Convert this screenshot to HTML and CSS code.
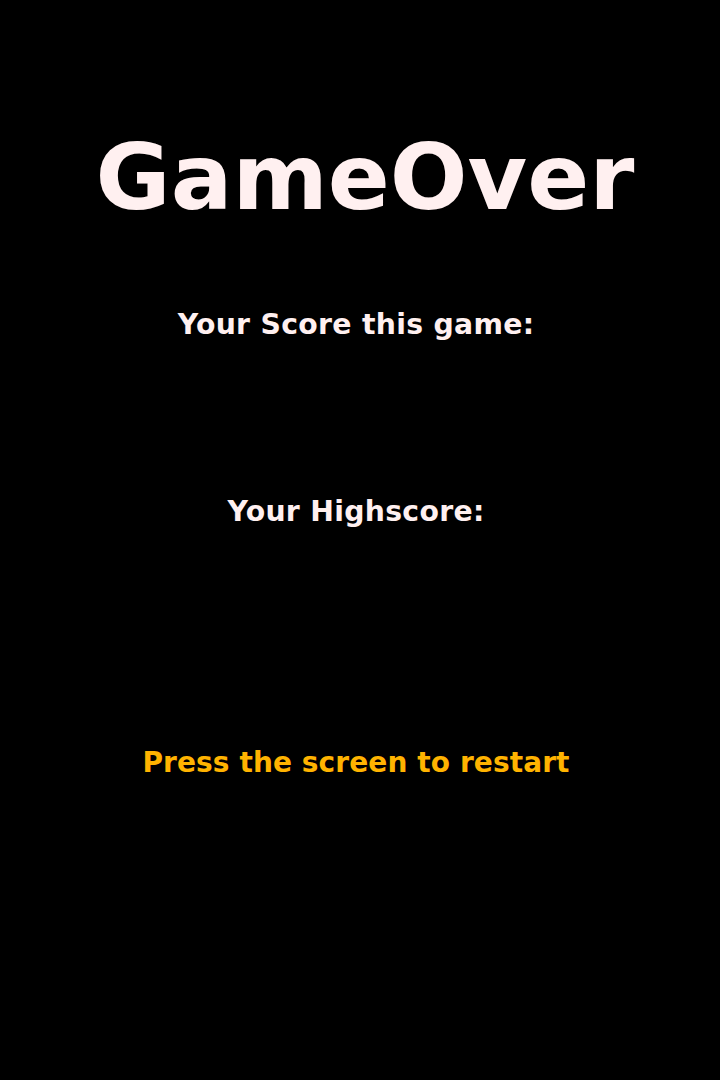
FILE: index.html
```html
<!DOCTYPE html>
<html lang="en">
<head>
<meta charset="utf-8">
<title>Game Over</title>
<link rel="stylesheet" href="styles.css">
</head>
<body>
<main class="screen">
  <h1 class="title">GameOver</h1>
  <section class="score">
    <p class="label">Your Score this game:</p>
    <p class="value"></p>
  </section>
  <section class="score">
    <p class="label">Your Highscore:</p>
    <p class="value"></p>
  </section>
  <p class="restart">Press the screen to restart</p>
</main>
</body>
</html>
```
FILE: styles.css
```css
html, body {
  margin: 0;
  padding: 0;
  background: #000;
}
body {
  font-family: "DejaVu Sans", "Liberation Sans", sans-serif;
  color: #fff0f0;
  min-height: 1080px;
}
.screen {
  display: flex;
  flex-direction: column;
  align-items: center;
  padding-top: 130px;
}
.title {
  margin: 0 0 79px;
  padding-left: 10px;
  font-size: 91.5px;
  line-height: 96px;
  font-weight: bold;
  letter-spacing: 0;
  color: #fff0f0;
}
.score {
  display: flex;
  flex-direction: column;
  align-items: center;
}
.label, .restart {
  margin: 0;
  font-size: 28.3px;
  line-height: 40px;
  font-weight: bold;
  letter-spacing: 0.3px;
  padding-right: 8px;
}
.value {
  margin: 0;
  min-height: 147px;
}
.restart {
  margin-top: 64px;
  font-size: 28px;
  color: #ffb300;
  letter-spacing: 0.1px;
}
```
